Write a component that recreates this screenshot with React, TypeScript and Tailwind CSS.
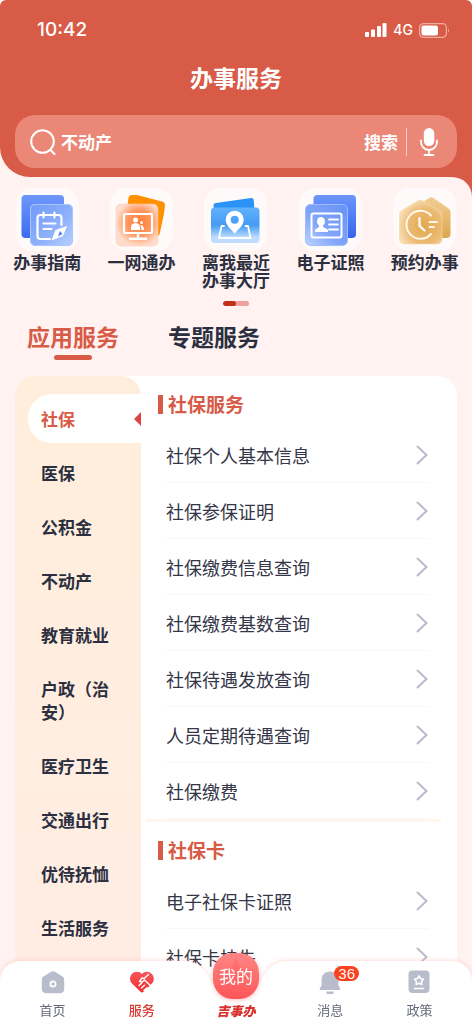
import React, { useState } from 'react';
import { clsx } from 'clsx';

const categories = [
  '社保',
  '医保',
  '公积金',
  '不动产',
  '教育就业',
  '户政（治安）',
  '医疗卫生',
  '交通出行',
  '优待抚恤',
  '生活服务',
];

const sections = [
  {
    title: '社保服务',
    items: [
      '社保个人基本信息',
      '社保参保证明',
      '社保缴费信息查询',
      '社保缴费基数查询',
      '社保待遇发放查询',
      '人员定期待遇查询',
      '社保缴费',
    ],
  },
  { title: '社保卡', items: ['电子社保卡证照', '社保卡挂失'] },
];

function GuideIcon() {
  return (
    <svg viewBox="0 0 63 63" className="size-full" fill="none">
      <defs>
        <linearGradient id="guideBack" x1="0" y1="0" x2="0" y2="1">
          <stop stopColor="#6f97fd" />
          <stop offset="1" stopColor="#3a6cf0" />
        </linearGradient>
        <linearGradient id="guideFront" x1="0" y1="0" x2="1" y2="1">
          <stop stopColor="#5f8df8" />
          <stop offset="0.6" stopColor="#86abfa" />
          <stop offset="1" stopColor="#bcd2ff" />
        </linearGradient>
      </defs>
      <rect x="5.5" y="7" width="42.5" height="43" rx="4" fill="url(#guideBack)" />
      <rect x="14" y="16" width="43" height="42" rx="5" fill="#b5ceff" />
      <rect x="14.5" y="16.5" width="42" height="41" rx="5" fill="url(#guideFront)" fillOpacity="0.8" stroke="#a9c4ff" />
      <g stroke="#fff" strokeWidth="2.2" strokeLinecap="round">
        <path d="M34 51H24.500a3 3 0 0 1-3-3V30a3 3 0 0 1 3-3h18a3 3 0 0 1 3 3v7" />
        <path d="M27.500 24.500v5M38.500 24.500v5M27.500 35.500h12M27.500 41h8" />
      </g>
      <path d="M51 38l-4 10-11.500 4.500 4-10.500L51 38z" fill="#fff" />
      <path d="M44 43l2.500 3-4.500 2.500L44 43z" fill="#4a7df5" />
    </svg>
  );
}

function NetworkIcon() {
  return (
    <svg viewBox="0 0 63 63" className="size-full" fill="none">
      <defs>
        <radialGradient id="netGlow" cx="0.55" cy="0.45" r="0.55">
          <stop stopColor="#ff7d35" />
          <stop offset="0.55" stopColor="#ff9860" />
          <stop offset="1" stopColor="#ffdccb" />
        </radialGradient>
      </defs>
      <path d="M22 7h5l25 6.500c2 .500 3 2 3 4l-1 8-4 19c-.500 3-2 4-5 4L17 42c-2-.500-3-2-2.500-4l4-28c.300-2 1.500-3 3.500-3z" fill="#ff9000" />
      <rect x="6" y="16" width="42" height="42" rx="5" fill="url(#netGlow)" stroke="#ffc9ac" strokeWidth="0.5" />
      <rect x="14" y="26" width="28" height="19" rx="1" stroke="#fff" strokeWidth="2.200" />
      <path d="M28 45v5M20 50.700h16" stroke="#fff" strokeWidth="2.500" strokeLinecap="round" />
      <circle cx="25.500" cy="32" r="2.500" fill="#fff" />
      <path d="M21 42v-2.500a4.500 4.500 0 0 1 9 0V42h-9z" fill="#fff" />
      <circle cx="31.500" cy="34.500" r="1.500" fill="#fff" />
      <path d="M31 37c2 0 3 2 3 5h-2.500l-1-5z" fill="#fff" />
    </svg>
  );
}

function HallIcon() {
  return (
    <svg viewBox="0 0 63 63" className="size-full" fill="none">
      <defs>
        <linearGradient id="hallFront" x1="0" y1="0" x2="0" y2="1">
          <stop stopColor="#62b1fc" />
          <stop offset="0.5" stopColor="#459bf4" />
          <stop offset="0.85" stopColor="#bfdeff" />
        </linearGradient>
      </defs>
      <path d="M12 15l35-5c1.500-.200 2.500.500 2.700 2L52 40H14L9.500 18c-.300-1.700.700-2.800 2.500-3z" fill="#2b93f8" />
      <rect x="7" y="19.500" width="48.500" height="35.500" rx="3.500" fill="url(#hallFront)" />
      <path d="M20 38h-2.500l-2.500 12h31.500L44 38h-2.500" stroke="#fff" strokeWidth="1.800" strokeLinecap="round" strokeLinejoin="round" />
      <path fillRule="evenodd" d="M30.700 22.700a9 9 0 0 0-9 9c0 6 5.500 9 9 14 3.500-5 9-8 9-14a9 9 0 0 0-9-9zm0 5a4 4 0 1 1 0 8 4 4 0 0 1 0-8z" fill="#fff" />
    </svg>
  );
}

function LicenseIcon() {
  return (
    <svg viewBox="0 0 63 63" className="size-full" fill="none">
      <defs>
        <linearGradient id="licBack" x1="0" y1="0" x2="0" y2="1">
          <stop stopColor="#6d95fc" />
          <stop offset="1" stopColor="#3467ee" />
        </linearGradient>
        <linearGradient id="licFront" x1="1" y1="0" x2="0" y2="1">
          <stop stopColor="#6791f8" />
          <stop offset="0.6" stopColor="#82a6fa" />
          <stop offset="1" stopColor="#bfd3ff" />
        </linearGradient>
      </defs>
      <rect x="14.500" y="7" width="42.500" height="43" rx="4" fill="url(#licBack)" />
      <rect x="6.500" y="16.500" width="42" height="41" rx="5" fill="url(#licFront)" stroke="#9ebcff" />
      <rect x="12.500" y="25.500" width="30" height="24" rx="2" stroke="#fff" strokeWidth="2" />
      <ellipse cx="22" cy="33.500" rx="4" ry="4.500" fill="#fff" />
      <path d="M20 37h4v2l4 2c.700.400 1 1 1 2v1H16v-1c0-1 .300-1.600 1-2l3-2v-2z" fill="#fff" />
      <path d="M30 31.500h9M30 36.500h9M30 41.500h9" stroke="#fff" strokeWidth="1.800" strokeLinecap="round" />
    </svg>
  );
}

function BookingIcon() {
  return (
    <svg viewBox="0 0 63 63" className="size-full" fill="none">
      <defs>
        <linearGradient id="bookBack" x1="0" y1="0" x2="0" y2="1">
          <stop stopColor="#f2cd91" />
          <stop offset="1" stopColor="#dda650" />
        </linearGradient>
        <radialGradient id="bookFront" cx="0.6" cy="0.6" r="0.65">
          <stop stopColor="#e5a84f" />
          <stop offset="0.6" stopColor="#ebba72" />
          <stop offset="1" stopColor="#f8dfb7" />
        </radialGradient>
      </defs>
      <path d="M36 10c1.500-1 3-1 4.500 0L55 20c1.500 1 2.500 2.500 2.500 4.500V46c0 2.500-1.500 4-4 4H24V18l12-8z" fill="url(#bookBack)" />
      <path d="M24.500 13c2-1.200 3.500-1.200 5.500 0L46 22c2 1.200 3 2.500 3 5v24c0 3-2 5-5 5H11.500c-3 0-5-2-5-5V27c0-2.500 1-3.800 3-5l15-9z" fill="url(#bookFront)" stroke="#f6d9a9" strokeWidth="0.6" />
      <path d="M38 27.500a14 14 0 1 0 0 18.500" stroke="#fff8ec" strokeWidth="2" strokeLinecap="round" />
      <path d="M26.500 30v8l5 4.500" stroke="#fff" strokeWidth="2.200" strokeLinecap="round" strokeLinejoin="round" />
      <path d="M36.500 34H44M36.500 39H41" stroke="#fff8ec" strokeWidth="1.800" strokeLinecap="round" />
    </svg>
  );
}

const shortcuts = [
  { label: '办事指南', icon: GuideIcon },
  { label: '一网通办', icon: NetworkIcon },
  { label: '离我最近办事大厅', icon: HallIcon },
  { label: '电子证照', icon: LicenseIcon },
  { label: '预约办事', icon: BookingIcon },
];

function StatusBar() {
  return (
    <div className="flex h-[60px] items-center justify-between pl-[37px] pr-[22px] text-white">
      <span className="font-[Inter,sans-serif] text-[19px] font-medium">10:42</span>
      <div className="flex items-center gap-[6px]">
        <svg width="22" height="14" viewBox="0 0 22 14" fill="#fff">
          <rect x="0" y="9" width="4" height="5" rx="1" />
          <rect x="6" y="6.500" width="4" height="7.500" rx="1" />
          <rect x="12" y="3" width="4" height="11" rx="1" />
          <rect x="17.500" y="0" width="4" height="14" rx="1" />
        </svg>
        <span className="font-[Inter,sans-serif] text-sm font-medium leading-5">4G</span>
        <svg width="31" height="15" viewBox="0 0 31 15" fill="none">
          <rect x="0.600" y="0.600" width="26.800" height="13.800" rx="4" stroke="#efab9f" strokeWidth="1.200" />
          <rect x="2.500" y="2.500" width="16.500" height="10" rx="2" fill="#fff" />
          <path d="M29 5.500c1.300.500 1.300 3.500 0 4v-4z" fill="#efab9f" />
        </svg>
      </div>
    </div>
  );
}

function SearchBar() {
  return (
    <form
      onSubmit={(e) => e.preventDefault()}
      className="mx-[15px] mt-[21px] flex h-[53px] items-center rounded-[20px] bg-[#ea8776] pl-[15px] pr-[19px] text-[17px] font-bold text-white"
    >
      <svg width="26" height="26" viewBox="0 0 26 26" fill="none" stroke="#fff" strokeWidth="2" strokeLinecap="round" className="shrink-0">
        <circle cx="12.500" cy="12.500" r="11.300" />
        <path d="M20.500 21l4 4" />
      </svg>
      <input aria-label="搜索服务" defaultValue="不动产" className="ml-[5px] min-w-0 flex-1 bg-transparent outline-none" />
      <button type="submit" className="shrink-0">搜索</button>
      <span className="ml-2 mr-[13px] h-7 w-px shrink-0 bg-[#f8cfc8]" />
      <button type="button" aria-label="语音输入" className="shrink-0">
        <svg width="18" height="28" viewBox="0 0 18 28" fill="none">
          <rect x="3.800" y="0" width="10.500" height="18" rx="5.250" fill="#fff" />
          <path d="M1 12.500v1.500a8 8 0 0 0 16 0v-1.500M9 22v5M4.500 27h9" stroke="#fff" strokeWidth="1.800" strokeLinecap="round" />
        </svg>
      </button>
    </form>
  );
}

function ServiceSection({ title, items }: { title: string; items: string[] }) {
  return (
    <section className="group">
      <h2 className="flex items-center gap-[5px] pb-[11px] pl-[17px] pt-4 text-[19px] font-bold leading-6 text-[#d85b47]">
        <span className="h-[19px] w-[5px] bg-[#d85b47]" />
        {title}
      </h2>
      <ul className="pl-[25px] pr-[29px]">
        {items.map((item) => (
          <li key={item}>
            <button className="flex h-14 w-full items-center justify-between border-b border-[#f7f7f8] text-left text-lg text-[#343647]">
              {item}
              <svg width="12" height="20" viewBox="0 0 12 20" fill="none" stroke="#b9bdcb" strokeWidth="2" strokeLinecap="round">
                <path d="M1.500 1.500L10.500 10l-9 8.500" />
              </svg>
            </button>
          </li>
        ))}
      </ul>
      <div className="ml-[5px] mr-4 h-[3px] bg-[#fff7ed] group-last:hidden" />
    </section>
  );
}

function NavItem({ label, active, children }: { label: string; active?: boolean; children: React.ReactNode }) {
  return (
    <button
      className={clsx(
        'flex flex-col items-center gap-2 text-[13px] leading-4',
        active ? 'font-medium text-[#dc3a32]' : 'text-[#666a7b]'
      )}
    >
      <span className="relative size-6">{children}</span>
      {label}
    </button>
  );
}

function BottomNav() {
  return (
    <nav className="fixed inset-x-0 bottom-0 h-[63px]">
      {/* bar background with the dip for the centre button */}
      <div className="absolute inset-0 flex drop-shadow-[0_-1px_2px_rgba(255,160,150,0.35)]">
        <div className="flex-1 rounded-tl-[20px] bg-white" />
        <svg width="120" height="63" viewBox="0 0 120 63" fill="#fff" className="shrink-0">
          <path d="M0 0h8c16 0 21 9 30 24h44c9-15 14-24 30-24h8v63H0z" />
        </svg>
        <div className="flex-1 rounded-tr-[20px] bg-white" />
      </div>

      <div className="relative grid grid-cols-[18fr_18fr_20fr_18fr_18fr] items-start px-2 pt-[9px]">
        <NavItem label="首页">
          <svg viewBox="0 0 24 24" fill="none">
            <path d="M10 1.800c1.300-.900 2.700-.900 4 0l7.500 4.700c1.200.800 1.700 1.800 1.700 3.200V19c0 2.600-1.600 4.200-4.200 4.200H5C2.400 23.200.8 21.600.8 19V9.700c0-1.400.5-2.400 1.700-3.200L10 1.800z" fill="#b9bdcb" />
            <circle cx="12" cy="14" r="2.600" stroke="#fff" strokeWidth="1.800" />
          </svg>
        </NavItem>
        <NavItem label="服务" active>
          <svg viewBox="0 0 24 24" fill="none">
            <defs>
              <linearGradient id="heart" x1="0" y1="0" x2="0" y2="1">
                <stop stopColor="#f8565a" />
                <stop offset="1" stopColor="#f52c30" />
              </linearGradient>
            </defs>
            <path d="M12 4C9.500.8 4.500 1 1.800 4S-.3 11 2 13.500l8.500 8.200c1 .900 2 .900 3 0L22 13.500c2.300-2.500 2.500-6.700-.2-9.500S14.500.8 12 4z" fill="url(#heart)" />
            <path d="M18.500 4.500L14 8.500l-2-.5-2.500 3.500 2.500.500 2.500-2L21 16M9 15.500l2.500-2.300M11.500 18l3-2.700M14 20.500l3-2.700" stroke="#fff" strokeWidth="1.500" strokeLinecap="round" strokeLinejoin="round" />
          </svg>
        </NavItem>
        <button className="mt-[-17px] flex flex-col items-center gap-1 text-[13px] font-black italic leading-4 text-[#d8302c]">
          <span className="relative flex size-[46px] items-center justify-center rounded-[20px] bg-linear-to-b from-[#ff8585] to-[#fc5558] text-[17px] font-normal not-italic text-white shadow-[0_1px_4px_rgba(255,90,90,0.4)]">
            <svg viewBox="0 0 46 46" className="absolute inset-0" fill="#ff5c5c" fillOpacity="0.4">
              <path d="M23 5l5 11 12 2-9 9 3 13-11-5-11 5 3-13-9-9 12-2z" />
            </svg>
            <span className="relative">我的</span>
          </span>
          吉事办
        </button>
        <NavItem label="消息">
          <svg viewBox="0 0 24 24" fill="#b9bdcb">
            <path d="M12 1.500c-5 0-8.500 3.500-8.500 8.500v5.500L2 18c-.700 1.200-.2 2 1 2h18c1.200 0 1.700-.800 1-2l-1.500-2.500V10c0-5-3.500-8.500-8.500-8.500zM8 21.500h8c-.5 2.500-2 4-4 4s-3.500-1.500-4-4z" />
          </svg>
          <span className="absolute -top-1 left-4 flex h-[15px] w-[25px] items-center justify-center rounded-full bg-[#fa4420] font-['Liberation_Sans',sans-serif] text-[15px] leading-none text-white">
            36
          </span>
        </NavItem>
        <NavItem label="政策">
          <svg viewBox="0 0 24 24" fill="none">
            <rect x="1.500" y="0.500" width="21" height="22.500" rx="4" fill="#b9bdcb" />
            <path d="M12 6l1.500 2.500 3 .700-2 2.300.300 3-2.800-1.200-2.800 1.200.300-3-2-2.300 3-.700L12 6z" stroke="#fff" strokeWidth="1.600" strokeLinejoin="round" />
            <path d="M7.500 18.500h9" stroke="#fff" strokeWidth="1.500" strokeLinecap="round" />
          </svg>
        </NavItem>
      </div>
    </nav>
  );
}

export default function App() {
  const [tab, setTab] = useState('应用服务');
  const [category, setCategory] = useState('社保');

  return (
    <div className="flex h-screen flex-col overflow-hidden bg-white font-['Noto_Sans_CJK_SC',sans-serif] text-[#2b2f40]">
      <div className="rounded-t-md bg-[#fff2f1]">
        <header className="rounded-t-md rounded-bl-[30px] bg-[#d85b47] pb-[9px]">
          <StatusBar />
          <h1 className="text-center text-[23px] font-bold leading-[34px] text-white">办事服务</h1>
          <SearchBar />
        </header>
      </div>

      <main className="min-h-0 flex-1 bg-[#d85b47]">
        <div className="flex h-full flex-col rounded-tr-[20px] bg-[#fff2f1] pt-[11px]">
          <div className="grid grid-cols-5">
            {shortcuts.map(({ label, icon: Icon }) => (
              <button key={label} className="flex flex-col items-center gap-[2px]">
                <span className="size-[63px] rounded-2xl bg-white/65">
                  <Icon />
                </span>
                <span className="w-[68px] text-center text-[17px] font-bold leading-[18px]">{label}</span>
              </button>
            ))}
          </div>

          <div className="mx-auto mt-3 flex h-[5px] w-[26px] shrink-0 overflow-hidden rounded-full bg-[#f0a09e]">
            <span className="w-[13px] rounded-full bg-[#c2301d]" />
          </div>

          <div className="mt-[17px] flex gap-[49px] px-[27px]">
            {['应用服务', '专题服务'].map((name) => (
              <button
                key={name}
                onClick={() => setTab(name)}
                className={clsx('flex flex-col items-center gap-[6px] text-[23px] font-bold leading-[26px]', tab === name && 'text-[#d85b47]')}
              >
                {name}
                {tab === name && <span className="h-[5px] w-[38px] rounded-full bg-[#d85b47]" />}
              </button>
            ))}
          </div>

          <div className="mx-[15px] mt-4 flex min-h-0 flex-1 overflow-hidden rounded-t-[20px] bg-white">
            <aside className="flex w-[126px] shrink-0 flex-col gap-[5px] rounded-t-[20px] bg-linear-to-b from-[#ffeedb] to-[#ffede5] pl-[13px] pt-[18px]">
              {categories.map((name) => (
                <button
                  key={name}
                  onClick={() => setCategory(name)}
                  className={clsx(
                    'relative shrink-0 rounded-l-3xl py-[13px] pl-[13px] pr-5 text-left text-[17px] font-bold leading-[23px]',
                    category === name && 'bg-white text-[#d85b47]'
                  )}
                >
                  {name}
                  {category === name && (
                    <svg width="7" height="14" viewBox="0 0 7 14" fill="#dc4446" className="absolute right-0 top-[18px]">
                      <path d="M7 0v14L0 7z" />
                    </svg>
                  )}
                </button>
              ))}
            </aside>
            <div className="min-w-0 flex-1">
              {sections.map((section) => (
                <ServiceSection key={section.title} {...section} />
              ))}
            </div>
          </div>
        </div>
      </main>

      <BottomNav />
    </div>
  );
}
